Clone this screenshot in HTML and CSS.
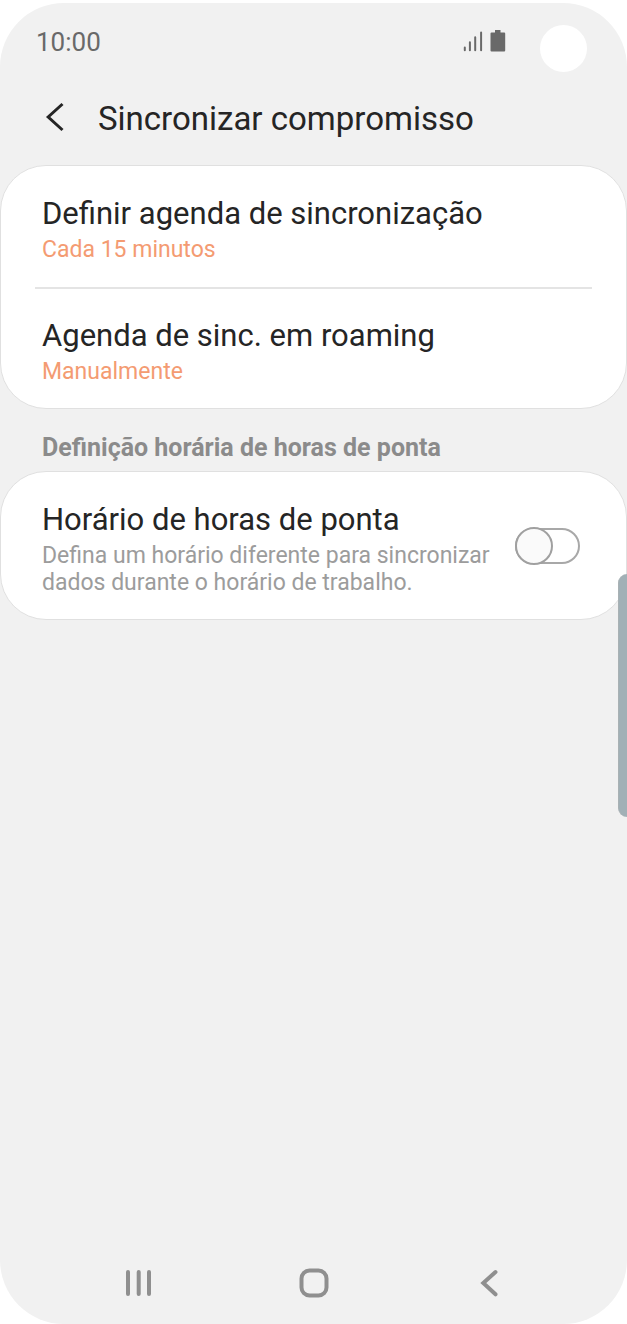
FILE: index.html
```html
<!DOCTYPE html>
<html lang="pt">
<head>
<meta charset="utf-8">
<meta name="viewport" content="width=device-width, initial-scale=1">
<title>Sincronizar compromisso</title>
<link rel="stylesheet" href="styles.css">
</head>
<body>
<div class="phone">
  <div class="status-bar">
    <span class="clock">10:00</span>
    <svg class="signal" viewBox="0 0 20 22" role="img" aria-label="Sinal">
      <path d="M1.800 17.500v2.800M6.900 12.300v8M12.200 7.300v13M18.100 2.500v17.800" />
    </svg>
    <svg class="battery" viewBox="0 0 16 22" role="img" aria-label="Bateria">
      <path d="M5 0h5.500v2.500h3.700q1 0 1 1v17q0 1-1 1h-12.700q-1 0-1-1v-17q0-1 1-1h3.500z" />
    </svg>
    <span class="camera"></span>
  </div>

  <header class="app-bar">
    <button class="back" type="button" aria-label="Voltar">
      <svg viewBox="0 0 20 30"><path d="M17.500 2 3.200 15 17.500 28" /></svg>
    </button>
    <h1 class="title">Sincronizar compromisso</h1>
  </header>

  <main class="content">
    <section class="card">
      <button class="row" type="button">
        <span class="row-title">Definir agenda de sincronização</span>
        <span class="row-value">Cada 15 minutos</span>
      </button>
      <hr class="divider">
      <button class="row" type="button">
        <span class="row-title">Agenda de sinc. em roaming</span>
        <span class="row-value">Manualmente</span>
      </button>
    </section>

    <h2 class="section-title">Definição horária de horas de ponta</h2>

    <section class="card">
      <label class="row row-switch" for="peak">
        <span class="row-text">
          <span class="row-title">Horário de horas de ponta</span>
          <span class="row-note">Defina um horário diferente para sincronizar dados durante o horário de trabalho.</span>
        </span>
        <input class="switch" id="peak" type="checkbox" role="switch">
      </label>
    </section>
  </main>

  <nav class="nav-bar">
    <button class="nav-button" type="button" aria-label="Recentes">
      <svg viewBox="0 0 30 30"><path d="M4 4v22M14.700 4v22M25 4v22" /></svg>
    </button>
    <button class="nav-button" type="button" aria-label="Início">
      <svg viewBox="0 0 30 30"><rect x="2.500" y="2.500" width="25" height="25" rx="8" /></svg>
    </button>
    <button class="nav-button" type="button" aria-label="Voltar">
      <svg viewBox="0 0 30 30"><path d="M21.500 4 9.300 15l12.200 11.300" /></svg>
    </button>
  </nav>

  <span class="edge-handle"></span>
</div>
</body>
</html>
```
FILE: styles.css
```css
* {
  box-sizing: border-box;
}

body {
  margin: 0;
  background: #fff;
  font-family: Roboto, "Liberation Sans", sans-serif;
  color: #252525;
}

button {
  border: 0;
  padding: 0;
  background: none;
  color: inherit;
  font: inherit;
  text-align: left;
  cursor: pointer;
}

svg {
  display: block;
  fill: none;
  stroke: currentColor;
}

.phone {
  position: relative;
  display: flex;
  flex-direction: column;
  min-height: calc(100vh - 3px);
  margin-top: 3px;
  border-radius: 64px;
  background: #f1f1f1;
  overflow: hidden;
}

.status-bar {
  display: flex;
  align-items: center;
  height: 76px;
  padding: 0 40px 0 36px;
  color: #696969;
}

.clock {
  flex: 1;
  padding-top: 2px;
  font-size: 26px;
  line-height: 32px;
}

.signal {
  width: 20px;
  height: 22px;
  stroke-width: 2;
  stroke-linecap: round;
}

.battery {
  width: 16px;
  height: 22px;
  margin: 0 34px 0 7px;
  fill: currentColor;
  stroke: none;
}

.camera {
  width: 47px;
  height: 47px;
  margin-top: 14px;
  border-radius: 50%;
  background: #fff;
}

.app-bar {
  display: flex;
  align-items: center;
  gap: 33px;
  height: 86px;
  padding: 0 45px 10px;
}

.back svg {
  width: 20px;
  height: 30px;
  stroke-width: 3;
}

.title {
  margin: 0;
  padding-top: 4px;
  font-size: 33px;
  line-height: 40px;
  font-weight: 400;
}

.content {
  flex: 1;
}

.card {
  padding-top: 1px;
  border: 1px solid #e0e0e0;
  border-radius: 46px;
  background: #fff;
}

.row {
  display: flex;
  flex-direction: column;
  gap: 2px;
  width: 100%;
  padding: 27px 41px 23px;
}

.row-switch {
  flex-direction: row;
  align-items: center;
  gap: 24px;
  padding-right: 46px;
  cursor: pointer;
}

.row-text {
  display: flex;
  flex: 1;
  flex-direction: column;
  gap: 2px;
}

.row-title {
  font-size: 31px;
  line-height: 40px;
}

.row-value,
.row-note {
  font-size: 23px;
  line-height: 27px;
}

.row-value {
  color: #f49b72;
}

.row-note {
  color: #9c9c9c;
}

.divider {
  height: 2px;
  margin: 1px 34px 0;
  border: 0;
  background: #e4e4e4;
}

.section-title {
  margin: 0;
  padding: 24px 42px 8px;
  font-size: 25px;
  line-height: 30px;
  font-weight: 700;
  color: #8b8b8b;
}

.switch {
  appearance: none;
  position: relative;
  flex: none;
  width: 65px;
  height: 36px;
  margin: 0 0 4px;
  border: 2px solid #a8a8a8;
  border-radius: 18px;
  background: #fff;
  cursor: pointer;
}

.switch::before {
  content: "";
  box-sizing: border-box;
  position: absolute;
  top: -3px;
  left: -2px;
  width: 38px;
  height: 38px;
  border: 2px solid #a0a0a0;
  border-radius: 50%;
  background: #fafafa;
}

.switch:checked::before {
  left: 25px;
}

.nav-bar {
  display: flex;
  justify-content: space-between;
  padding: 0 123px 26px 124px;
  color: #8f8f8f;
}

.nav-button svg {
  width: 30px;
  height: 30px;
  stroke-width: 4;
  stroke-linecap: round;
}

.edge-handle {
  position: absolute;
  top: 571px;
  right: 0;
  width: 9px;
  height: 243px;
  border-left: 1px solid #a9b1b4;
  border-radius: 9px 0 0 9px;
  background: #a1b0b6;
}
```
